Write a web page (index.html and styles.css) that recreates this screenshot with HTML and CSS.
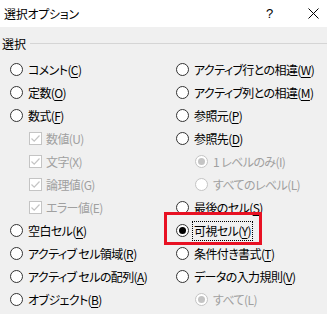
FILE: index.html
```html
<!DOCTYPE html>
<html lang="ja">
<head>
<meta charset="utf-8">
<link rel="stylesheet" href="styles.css">
</head>
<body>
<div class="dialog">
  <div class="titlebar">
    <span class="title">選択オプション</span>
    <span class="help">?</span>
    <svg class="close" width="11" height="11" viewBox="0 0 11 11"><path d="M0.5 0.5 L10.5 10.5 M10.5 0.5 L0.5 10.5" stroke="#000" stroke-width="1" fill="none"/></svg>
  </div>
  <div class="body">
    <div class="legend"><span class="legend-text">選択</span><span class="rule"></span></div>
    <div class="cols">
      <div class="col">
        <div class="row"><span class="radio"></span><span class="label">コメント(<u>C</u>)</span></div>
        <div class="row"><span class="radio"></span><span class="label">定数(<u>O</u>)</span></div>
        <div class="row"><span class="radio"></span><span class="label">数式(<u>F</u>)</span></div>
        <div class="row sub disabled"><span class="check"><svg width="11" height="11" viewBox="0 0 11 11"><path d="M1.5 5.5 L4.2 8.2 L9.5 2.5" stroke="#c4c4c4" stroke-width="1.2" fill="none"/></svg></span><span class="label">数値(U)</span></div>
        <div class="row sub disabled"><span class="check"><svg width="11" height="11" viewBox="0 0 11 11"><path d="M1.5 5.5 L4.2 8.2 L9.5 2.5" stroke="#c4c4c4" stroke-width="1.2" fill="none"/></svg></span><span class="label">文字(X)</span></div>
        <div class="row sub disabled"><span class="check"><svg width="11" height="11" viewBox="0 0 11 11"><path d="M1.5 5.5 L4.2 8.2 L9.5 2.5" stroke="#c4c4c4" stroke-width="1.2" fill="none"/></svg></span><span class="label">論理値(G)</span></div>
        <div class="row sub disabled"><span class="check"><svg width="11" height="11" viewBox="0 0 11 11"><path d="M1.5 5.5 L4.2 8.2 L9.5 2.5" stroke="#c4c4c4" stroke-width="1.2" fill="none"/></svg></span><span class="label">エラー値(E)</span></div>
        <div class="row"><span class="radio"></span><span class="label">空白セル(<u>K</u>)</span></div>
        <div class="row"><span class="radio"></span><span class="label">アクティブ セル領域(<u>R</u>)</span></div>
        <div class="row"><span class="radio"></span><span class="label">アクティブ セルの配列(<u>A</u>)</span></div>
        <div class="row"><span class="radio"></span><span class="label">オブジェクト(<u>B</u>)</span></div>
      </div>
      <div class="col">
        <div class="row"><span class="radio"></span><span class="label">アクティブ行との相違(<u>W</u>)</span></div>
        <div class="row"><span class="radio"></span><span class="label">アクティブ列との相違(<u>M</u>)</span></div>
        <div class="row"><span class="radio"></span><span class="label">参照元(<u>P</u>)</span></div>
        <div class="row"><span class="radio"></span><span class="label">参照先(<u>D</u>)</span></div>
        <div class="row sub2 disabled"><span class="radio on"></span><span class="label">1 レベルのみ(I)</span></div>
        <div class="row sub2 disabled"><span class="radio"></span><span class="label">すべてのレベル(L)</span></div>
        <div class="row"><span class="radio"></span><span class="label">最後のセル(<u>S</u>)</span></div>
        <div class="row"><span class="radio on"></span><span class="label focus">可視セル(<u>Y</u>)</span></div>
        <div class="row"><span class="radio"></span><span class="label">条件付き書式(<u>T</u>)</span></div>
        <div class="row"><span class="radio"></span><span class="label">データの入力規則(<u>V</u>)</span></div>
        <div class="row sub2 disabled"><span class="radio on"></span><span class="label">すべて(L)</span></div>
      </div>
    </div>
  </div>
  <div class="annot"></div>
</div>
</body>
</html>
```

FILE: styles.css
```css
* { box-sizing: border-box; }
html, body { margin: 0; padding: 0; }
body {
  width: 327px;
  height: 314px;
  overflow: hidden;
  background: #f0f0f0;
  font-family: "Noto Sans CJK JP", "Noto Sans", sans-serif;
  font-size: 12px;
  font-feature-settings: "palt";
  color: #000;
}
.dialog { position: relative; width: 327px; height: 314px; }
.titlebar {
  height: 27px;
  background: #fff;
  display: flex;
  align-items: center;
  padding-left: 4px;
}
.title { flex: 1; font-size: 12px; letter-spacing: -0.3px; }
.help { width: 12px; margin-right: 30px; font-family: "Liberation Sans", sans-serif; font-size: 13px; }
.close { margin-right: 8px; }
.body { padding: 0 0 0 2px; }
.legend {
  display: flex;
  align-items: center;
  height: 31px;
  padding-top: 2px;
}
.legend-text { margin-right: 4px; }
.rule { flex: 1; height: 1px; background: #d5d5d5; margin-top: 0; }
.cols {
  display: grid;
  grid-template-columns: 166px 1fr;
  padding-left: 8px;
}
.col { display: flex; flex-direction: column; }
.row {
  height: 23px;
  display: flex;
  align-items: center;
  white-space: nowrap;
}
.label { line-height: 16px; letter-spacing: -0.6px; }
.radio {
  width: 13px;
  height: 13px;
  border: 1px solid #333;
  border-radius: 50%;
  background: #fff;
  margin-right: 5px;
  flex: none;
  display: flex;
  align-items: center;
  justify-content: center;
}
.radio.on::after {
  content: "";
  width: 7px;
  height: 7px;
  border-radius: 50%;
  background: #000;
}
.sub { padding-left: 19px; }
.sub2 { padding-left: 19px; }
.check {
  width: 13px;
  height: 13px;
  border: 1px solid #c4c4c4;
  background: #fff;
  margin-right: 4px;
  flex: none;
  display: flex;
  align-items: center;
  justify-content: center;
}
.disabled { color: #a0a0a0; }
.disabled .radio { border-color: #c4c4c4; }
.disabled .radio.on::after { background: #c4c4c4; }
.focus { outline: 1px dotted #000; outline-offset: 1px; }
u { text-decoration-thickness: 1px; text-underline-offset: 2px; }
.annot {
  position: absolute;
  left: 164px;
  top: 212px;
  width: 98px;
  height: 33px;
  border: 3px solid #e81123;
}
```
